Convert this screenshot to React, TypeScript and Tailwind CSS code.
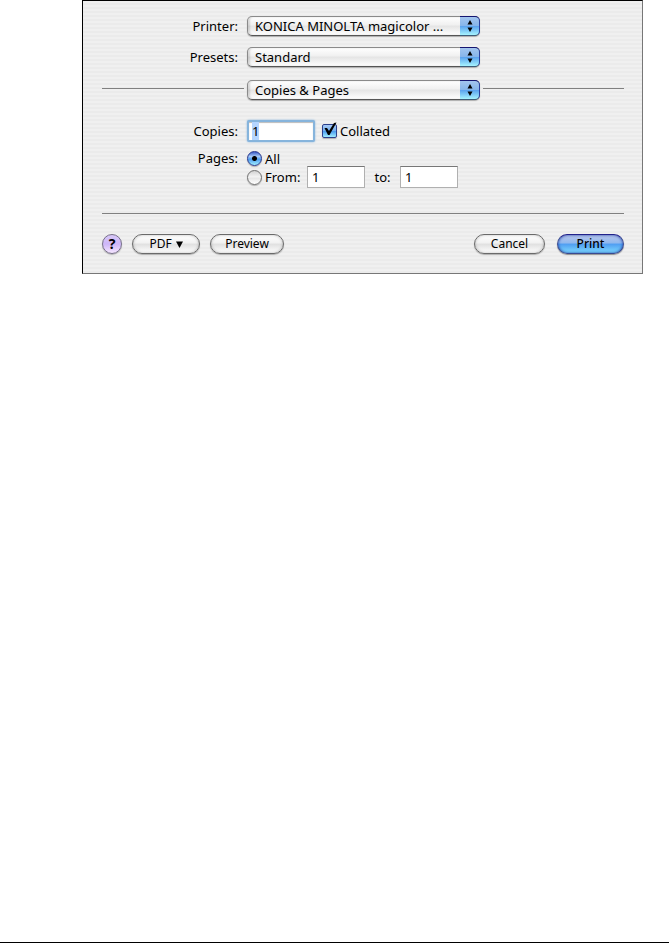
import React, { useEffect, useRef, useState } from 'react';

interface PopupProps {
  id: string;
  label?: string;
  options: string[];
}

const Popup: React.FC<PopupProps> = ({ id, label, options }) => (
  <div className="relative w-[233px] shrink-0">
    <select
      id={id}
      aria-label={label}
      className="block w-full h-5 pl-[7px] pr-6 appearance-none rounded-[5px] border border-[#8a8a8a] border-b-[#555] bg-[linear-gradient(#fff,#f0f0f0_45%,#e4e4e4_50%,#fff)] shadow-[0_1px_1px_#0004,inset_2px_0_2px_#0002] text-[13px] leading-[18px] outline-none"
    >
      {options.map((o) => (
        <option key={o}>{o}</option>
      ))}
    </select>
    <span className="absolute right-0 top-0 h-5 w-5 rounded-r-[5px] border-t border-r border-b border-t-[#151570] border-r-[#2a3f9c] border-b-[#3d5c78] bg-[linear-gradient(#a3c5ee,#86b5ea_48%,#5ba3ee_52%,#a6f4ff)] pointer-events-none flex justify-center">
      <svg width="6" height="12" viewBox="0 0 6 12" className="mt-[3px]">
        <path d="M3 0 L5.5 4.5 H0.5 Z M3 12 L5.5 7.5 H0.5 Z" fill="#000" />
      </svg>
    </span>
  </div>
);

const radioClass =
  'appearance-none w-[15px] h-[15px] shrink-0 rounded-full border border-[#707070] bg-[linear-gradient(#d2d2d2,#f4f4f4_45%,#e6e6e6_55%,#fff)] shadow-[0_1px_1px_#0004] checked:border-[#26358c] checked:bg-[radial-gradient(circle,#000_0_2px,transparent_3px),linear-gradient(#3a5cc8,#a9cbf6_35%,#4d9bf0_55%,#a0f0ff)]';

const fieldClass =
  'w-[58px] h-[22px] pl-1 bg-white border border-[#b0b0b0] border-t-[#777] text-[13px] outline-none';

const buttonClass =
  'h-5 rounded-full border border-[#6a6a6a] bg-[linear-gradient(#fff,#f1f1f1_45%,#e0e0e0_50%,#fff)] shadow-[0_1px_1px_#0004,inset_0_0_3px_#0004] text-[12px] leading-[18px]';

export default function App() {
  const [range, setRange] = useState<'all' | 'from'>('all');
  const copiesRef = useRef<HTMLInputElement>(null);

  useEffect(() => {
    copiesRef.current?.focus();
    copiesRef.current?.select();
  }, []);

  return (
    <div className="min-h-screen flex flex-col bg-white border-b border-black text-black text-[13px] leading-5 font-['Noto_Sans','Open_Sans',sans-serif]">
      <form
        onSubmit={(e) => e.preventDefault()}
        className="ml-[82px] mr-[26px] pt-[15px] pb-[19px] pl-[19px] pr-[18px] border border-t-black border-l-black border-r-[#777] border-b-[#777] bg-[repeating-linear-gradient(#f0f0f0_0_2px,#ebebeb_2px_4px)]"
      >
        <div className="flex items-center gap-[9px]">
          <label htmlFor="printer" className="w-[136px] text-right">Printer:</label>
          <Popup id="printer" options={['KONICA MINOLTA magicolor ...']} />
        </div>
        <div className="flex items-center gap-[9px] mt-[11px]">
          <label htmlFor="presets" className="w-[136px] text-right">Presets:</label>
          <Popup id="presets" options={['Standard']} />
        </div>
        <div className="flex items-start gap-[3px] mt-[13px]">
          <div className="w-[142px] mt-2 h-px bg-[#808080]" />
          <Popup id="pane" label="Print options" options={['Copies & Pages']} />
          <div className="flex-1 mt-2 h-px bg-[#808080]" />
        </div>

        <div className="flex items-center mt-5">
          <label htmlFor="copies" className="w-[136px] text-right">Copies:</label>
          <input
            id="copies"
            ref={copiesRef}
            defaultValue="1"
            className="ml-[9px] w-[68px] h-[22px] pl-[3px] bg-white border-2 border-[#86b4dc] rounded-[2px] shadow-[0_0_2px_#7fb0dd,inset_0_1px_1px_#0004] text-[13px] outline-none selection:bg-[#b5d5ff] selection:text-black"
          />
          <label className="ml-[7px] flex items-center gap-[3px]">
            <span className="relative block w-[15px] h-[14px]">
              <input
                type="checkbox"
                defaultChecked
                className="peer block appearance-none w-full h-full rounded-[2px] border border-[#2b3f8c] bg-[linear-gradient(#a8caf4,#74b0f0_48%,#4a9aee_52%,#a0eeff)] shadow-[0_1px_1px_#0004]"
              />
              <svg
                width="15"
                height="15"
                viewBox="0 0 15 15"
                className="absolute left-0 bottom-px hidden peer-checked:block pointer-events-none"
              >
                <path d="M2.5 6 L5 6 L7 9 L12 1 L14.5 0.5 L7.5 13 L6 13 Z" fill="#000" />
              </svg>
            </span>
            Collated
          </label>
        </div>

        <div role="radiogroup" aria-labelledby="pages" className="mt-[9px] flex gap-[9px]">
          <span id="pages" className="w-[136px] h-[15px] leading-[15px] text-right">Pages:</span>
          <div>
            <label className="flex items-center gap-[3px] h-[15px]">
              <input
                type="radio"
                name="range"
                checked={range === 'all'}
                onChange={() => setRange('all')}
                className={radioClass}
              />
              All
            </label>
            <div className="flex items-center h-[22px]">
              <label className="w-[60px] flex items-center gap-[3px]">
                <input
                  type="radio"
                  name="range"
                  checked={range === 'from'}
                  onChange={() => setRange('from')}
                  className={radioClass}
                />
                From:
              </label>
              <input aria-label="From page" defaultValue="1" className={fieldClass} />
              <label htmlFor="to" className="w-[35px] text-center">to:</label>
              <input id="to" defaultValue="1" className={fieldClass} />
            </div>
          </div>
        </div>

        <div className="mt-[25px] h-px bg-[#808080]" />

        <div className="mt-5 flex items-center">
          <button
            type="button"
            aria-label="Help"
            className="w-5 h-5 rounded-full border border-[#77708a] bg-[linear-gradient(#d8c8f8,#cdb6f8_50%,#f6e6ff)] shadow-[0_1px_1px_#0004] font-bold text-[14px] leading-[18px]"
          >
            ?
          </button>
          <button type="button" className={`${buttonClass} ml-[10px] w-[68px] flex items-center justify-center gap-1`}>
            PDF
            <svg width="7" height="7" viewBox="0 0 7 7">
              <path d="M0 0.5 H7 L3.5 7 Z" fill="#000" />
            </svg>
          </button>
          <button type="button" className={`${buttonClass} ml-[10px] w-[74px]`}>Preview</button>
          <button type="button" className={`${buttonClass} ml-auto w-[71px]`}>Cancel</button>
          <button
            type="submit"
            className="ml-3 w-[67px] h-5 rounded-full border border-[#3a4a90] border-t-[#22228a] bg-[linear-gradient(#b9c6ec,#8fb8ee_45%,#4f9df2_50%,#7fdcff)] shadow-[0_1px_1px_#0006,inset_0_0_3px_#1a3aa0] text-[12px] leading-[18px] font-medium"
          >
            Print
          </button>
        </div>
      </form>
    </div>
  );
}
